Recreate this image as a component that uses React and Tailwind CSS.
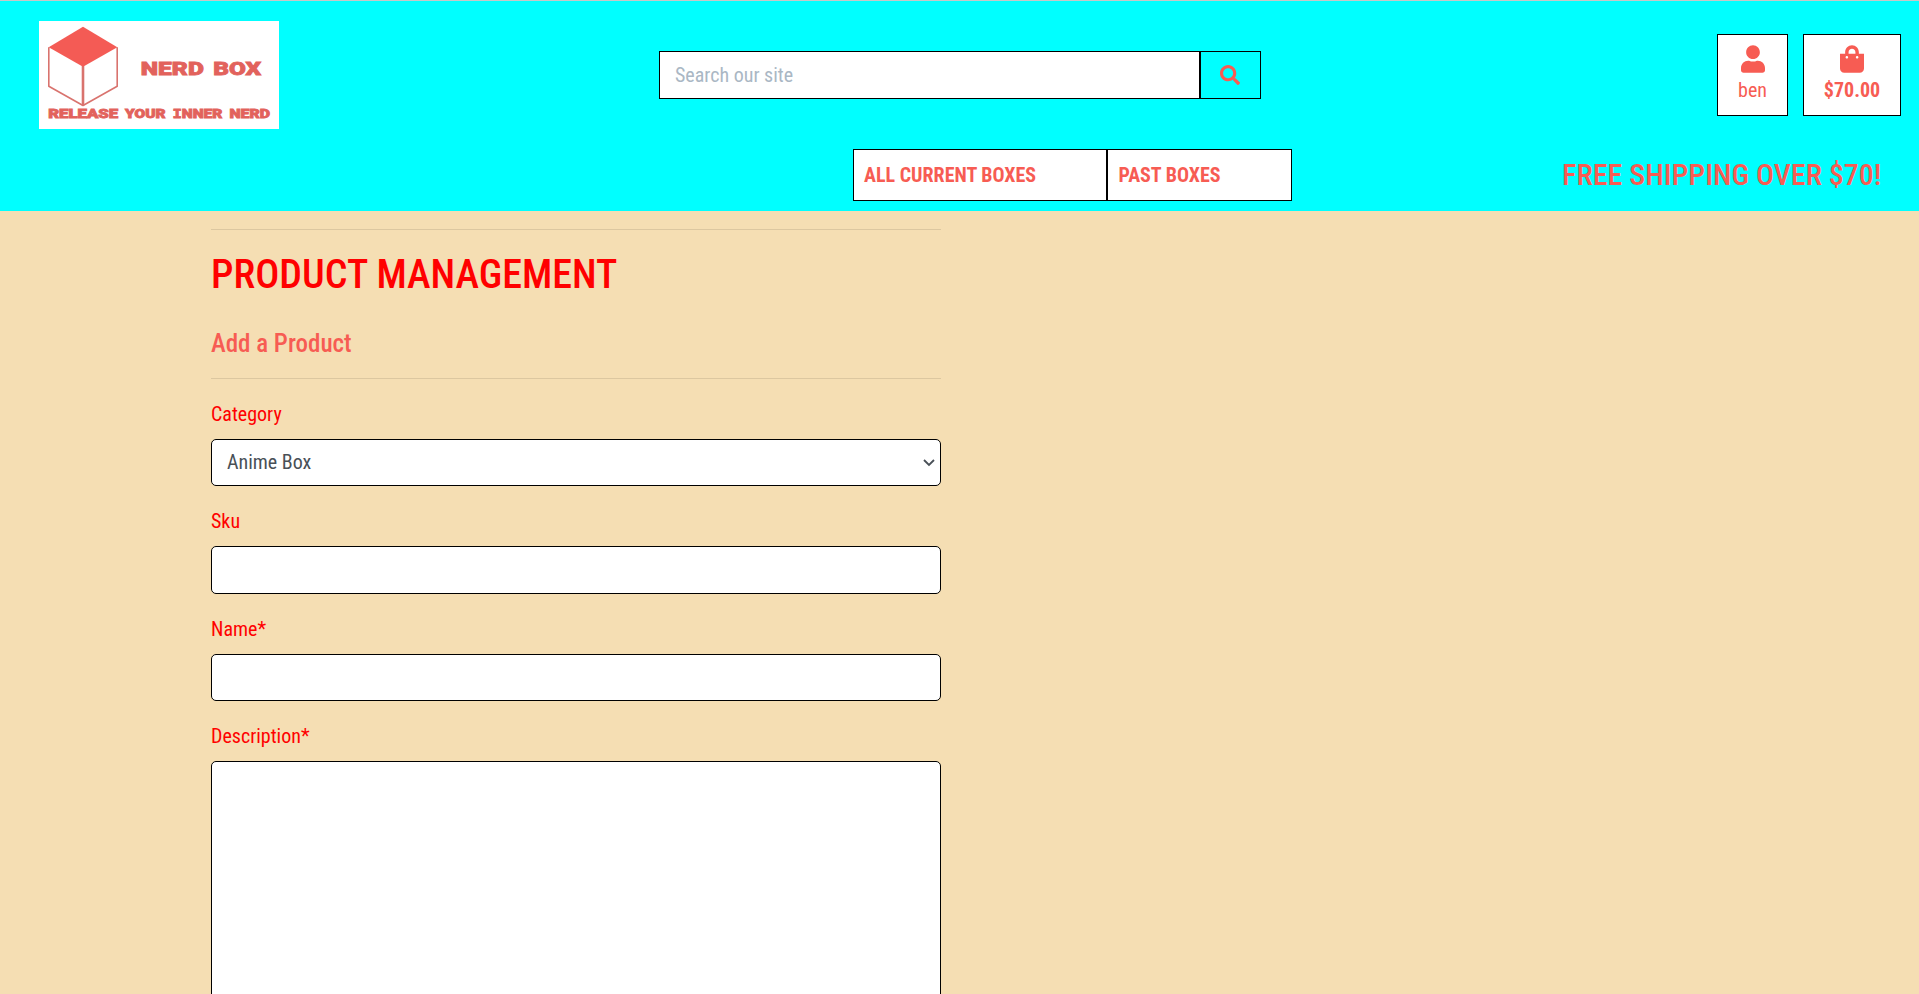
import { FaUser, FaShoppingBag, FaSearch } from "react-icons/fa";

const words = [
  { word: "NERD", x: 101.8, y: 53.6, size: 18.6, width: 63 },
  { word: "BOX", x: 174.2, y: 53.6, size: 18.6, width: 48 },
  { word: "RELEASE", x: 9.2, y: 97.4, size: 12.4, width: 70 },
  { word: "YOUR", x: 86, y: 97.4, size: 12.4, width: 40.6 },
  { word: "INNER", x: 133.4, y: 97.4, size: 12.4, width: 50 },
  { word: "NERD", x: 190.4, y: 97.4, size: 12.4, width: 40.6 },
];

function Logo() {
  return (
    <svg viewBox="0 0 240 108" className="h-[108px] w-[240px] bg-white" role="img" aria-label="Nerd Box">
      <g fill="none" stroke="#d9736e" strokeWidth="1.6" strokeLinejoin="round">
        <path d="M9.8 26.3V65.3L44 84.5L78.2 65.3V26.3" />
        <path d="M44 45V84.5" strokeWidth="2.6" />
      </g>
      <path d="M44 5.7L78.3 26.3L44 45.7L9.7 26.3Z" fill="#f45b55" />
      <g fill="#e2625c" stroke="#e2625c" strokeWidth="0.8" className="font-['Roboto'] font-black [font-stretch:100%]">
        {words.map(({ word, x, y, size, width }) => (
          <text key={`${word}-${y}`} x={x} y={y} fontSize={size} textLength={width} lengthAdjust="spacingAndGlyphs">
            {word[0] === "I" ? (
              <>
                <tspan className="font-['DejaVu_Sans_Mono'] font-bold">I</tspan>
                {word.slice(1)}
              </>
            ) : (
              word
            )}
          </text>
        ))}
      </g>
    </svg>
  );
}

function Field({ label, children }) {
  return (
    <div className="mb-5 flex flex-col gap-2.5">
      <label className="leading-[30px] text-[#ff0000]">{label}</label>
      {children}
    </div>
  );
}

const control = "block w-full rounded-[5px] border border-black bg-white px-[15px] text-[#495057] outline-none";

export default function App() {
  return (
    <div className="h-[994px] overflow-hidden bg-[#f5deb3] font-['Roboto_Condensed','Roboto',sans-serif] text-[20px] leading-[30px] [font-stretch:75%]">
      <header className="h-[211px] border-t border-[#c8c8c8] bg-[#00ffff] text-[#f75c53]">
        <div className="flex h-[148px] items-start pt-5 pr-[18px] pl-[39px]">
          <Logo />
          <form className="mt-[30px] ml-[380px] flex h-12 w-[602px]">
            <input
              placeholder="Search our site"
              className="w-[541px] border border-black bg-white px-[15px] outline-none placeholder:text-[#aab7c4]"
            />
            <button type="button" className="flex flex-1 items-center justify-center border border-black pr-0.5" aria-label="Search">
              <FaSearch className="size-5" />
            </button>
          </form>
          <div className="mt-[13px] ml-auto flex gap-[15px] text-center">
            <a className="flex h-[82px] w-[71px] flex-col items-center border border-black bg-white pt-[10px]">
              <FaUser className="h-[28px] w-6" />
              <span className="mt-[2px]">ben</span>
            </a>
            <a className="flex h-[82px] w-[98px] flex-col items-center border border-black bg-white pt-[10px]">
              <FaShoppingBag className="h-[28px] w-6" />
              <span className="mt-[2px] font-bold">$70.00</span>
            </a>
          </div>
        </div>
        <div className="flex h-[52px] items-center pr-[37.5px] pl-[853px]">
          <nav className="flex h-[52px] font-bold">
            <a className="flex w-[254px] items-center border border-black bg-white px-2.5">ALL CURRENT BOXES</a>
            <a className="flex w-[185px] items-center border border-black bg-white px-[10.5px]">PAST BOXES</a>
          </nav>
          <h4 className="ml-auto text-[30px] leading-9 font-medium">FREE SHIPPING OVER $70!</h4>
        </div>
      </header>
      <main className="ml-[211px] w-[730px] pt-[18px]">
        <hr className="border-black/10" />
        <h2 className="mt-[21px] text-[40px] leading-[48px] font-medium text-[#ff0000]">PRODUCT MANAGEMENT</h2>
        <h5 className="mt-[30px] text-[25px] leading-[30px] font-medium text-[#f75c53]">Add a Product</h5>
        <hr className="mt-[19px] mb-5 border-black/10" />
        <form>
          <Field label="Category">
            <div className="relative">
              <select className={`${control} h-[47px] appearance-none pb-px`}>
                <option>Anime Box</option>
              </select>
              <svg viewBox="0 0 12 8" className="pointer-events-none absolute top-5 right-[6px] h-2 w-3" fill="none" stroke="#495057" strokeWidth="1.8">
                <path d="M1 1L6 6L11 1" />
              </svg>
            </div>
          </Field>
          <Field label="Sku">
            <input className={`${control} h-[48px]`} />
          </Field>
          <Field label="Name*">
            <input className={`${control} h-[47px]`} />
          </Field>
          <Field label="Description*">
            <textarea className={`${control} h-[317px] resize-none`} />
          </Field>
        </form>
      </main>
    </div>
  );
}
